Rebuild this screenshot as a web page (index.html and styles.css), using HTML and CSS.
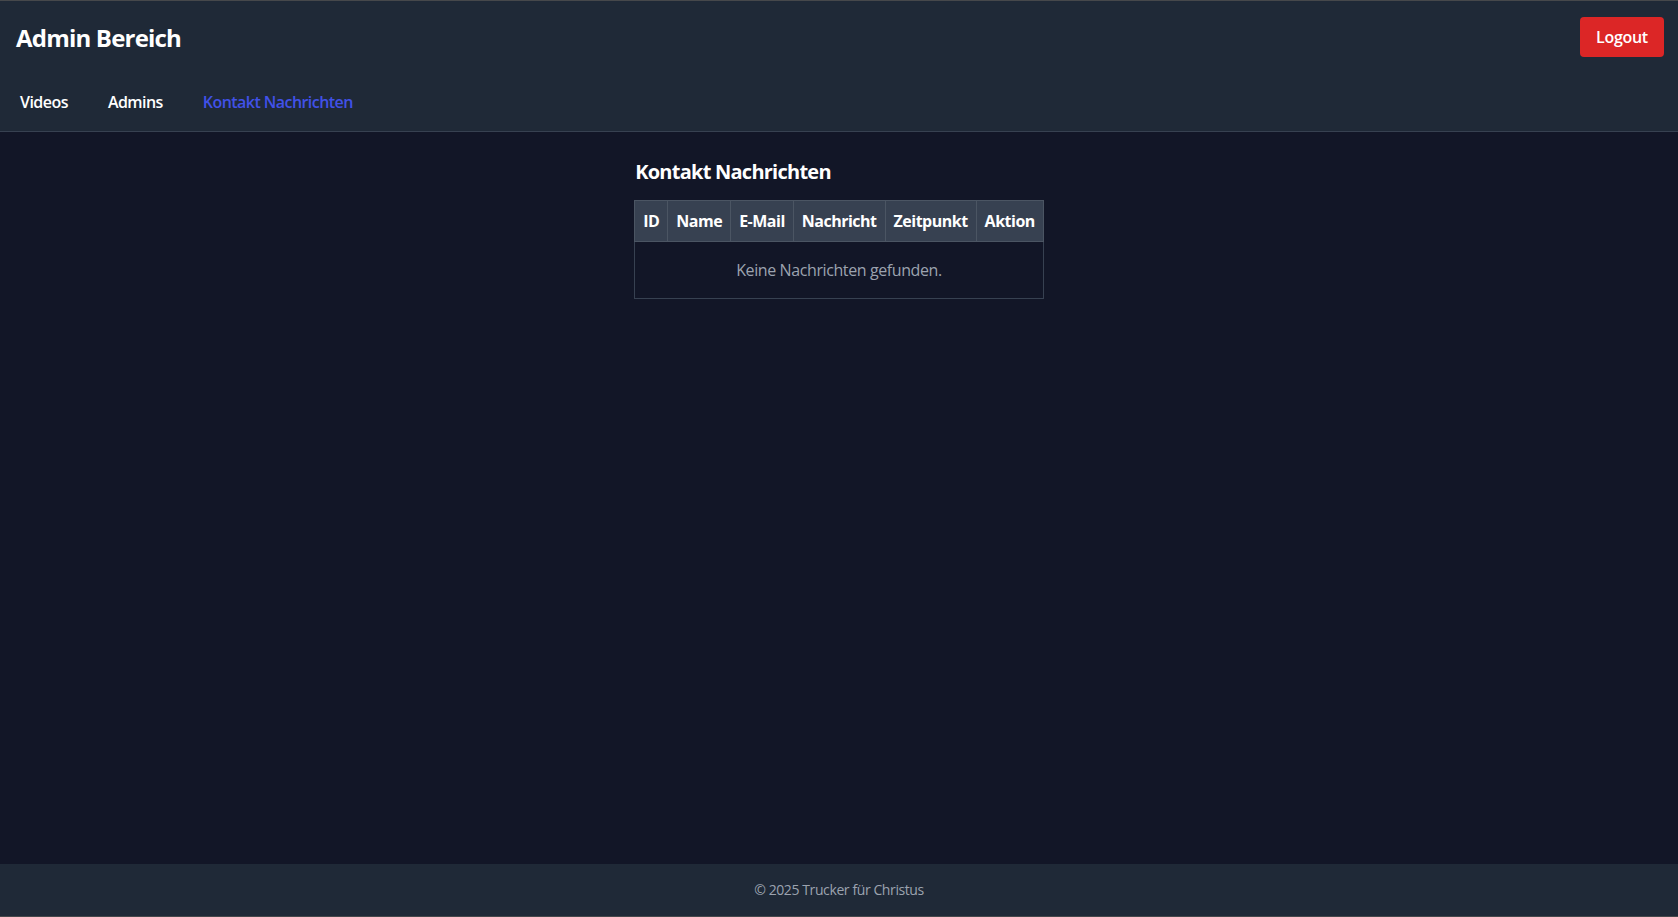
FILE: index.html
```html
<!DOCTYPE html>
<html lang="de">
<head>
<meta charset="utf-8">
<title>Admin Bereich</title>
<link rel="stylesheet" href="styles.css">
</head>
<body>
<header class="site-header">
  <div class="top-row">
    <h1 class="brand">Admin Bereich</h1>
    <button class="logout">Logout</button>
  </div>
  <nav class="nav">
    <a class="nav-link" href="#">Videos</a>
    <a class="nav-link" href="#">Admins</a>
    <a class="nav-link active" href="#">Kontakt Nachrichten</a>
  </nav>
</header>
<main class="main">
  <section class="panel">
    <h2 class="panel-title">Kontakt Nachrichten</h2>
    <table class="msg-table">
      <thead>
        <tr>
          <th>ID</th>
          <th>Name</th>
          <th>E-Mail</th>
          <th>Nachricht</th>
          <th>Zeitpunkt</th>
          <th>Aktion</th>
        </tr>
      </thead>
      <tbody>
        <tr>
          <td class="empty" colspan="6">Keine Nachrichten gefunden.</td>
        </tr>
      </tbody>
    </table>
  </section>
</main>
<footer class="site-footer">© 2025 Trucker für Christus</footer>
</body>
</html>
```
FILE: styles.css
```css
* { box-sizing: border-box; }
html, body { margin: 0; padding: 0; height: 100%; }
body {
  font-family: "Open Sans", "Noto Sans", sans-serif;
  background: #121627;
  color: #ffffff;
  display: flex;
  flex-direction: column;
  border-top: 1px solid #46484b;
  border-bottom: 1px solid #46484b;
}
.site-header {
  background: #1f2937;
  border-bottom: 1px solid #374151;
  padding: 16px 14px 13px 16px;
}
.top-row {
  display: flex;
  justify-content: space-between;
  align-items: center;
  height: 40px;
}
.brand {
  margin: 2px 0 0 0;
  font-size: 24px;
  line-height: 32px;
  font-weight: 700;
  letter-spacing: -0.8px;
}
.logout {
  background: #dc2626;
  color: #fff;
  border: none;
  border-radius: 4px;
  height: 40px;
  width: 84px;
  padding: 0;
  font-family: inherit;
  font-size: 16px;
  font-weight: 600;
  letter-spacing: -0.3px;
}
.nav {
  display: flex;
  gap: 32px;
  margin-top: 29px;
}
.nav-link {
  color: #fff;
  text-decoration: none;
  font-size: 16px;
  line-height: 24px;
  font-weight: 600;
  padding: 4px;
  letter-spacing: -0.55px;
}
.nav-link.active { color: #4151e8; }
.main {
  flex: 1;
  display: flex;
  justify-content: center;
  padding-top: 26px;
}
.panel { width: fit-content; }
.panel-title {
  margin: 0 0 14px 1px;
  font-size: 20px;
  line-height: 28px;
  font-weight: 700;
  letter-spacing: -0.75px;
}
.msg-table {
  border-collapse: collapse;
  border: 1px solid #374151;
}
.msg-table th {
  background: #374151;
  border: 1px solid #4b5563;
  padding: 8px;
  font-size: 16px;
  line-height: 24px;
  font-weight: 700;
  letter-spacing: -0.5px;
  text-align: left;
}
.msg-table td {
  border: 1px solid #374151;
}
.empty {
  text-align: center;
  color: #9ca3af;
  padding: 16px;
  font-size: 16px;
  line-height: 24px;
  letter-spacing: -0.4px;
}
.site-footer {
  background: #1f2937;
  color: #9ca3af;
  text-align: center;
  font-size: 14px;
  line-height: 20px;
  padding: 16px;
  letter-spacing: -0.4px;
}
```
